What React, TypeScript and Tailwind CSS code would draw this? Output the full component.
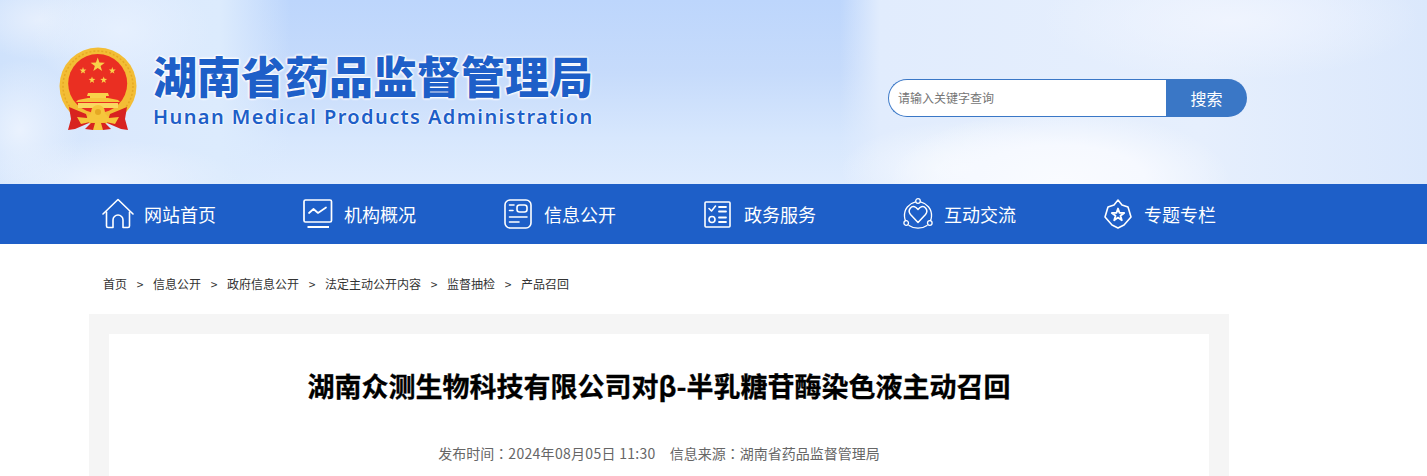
import * as React from "react";

const cjk = "font-['Noto_Sans_CJK_SC','Noto_Sans',sans-serif]";

const starPoints = (cx: number, cy: number, r: number) =>
  Array.from({ length: 10 }, (_, i) => {
    const radius = i % 2 === 0 ? r : r * 0.4;
    const a = (Math.PI / 5) * i - Math.PI / 2;
    return `${(cx + radius * Math.cos(a)).toFixed(2)},${(cy + radius * Math.sin(a)).toFixed(2)}`;
  }).join(" ");

function Emblem() {
  return (
    <svg width="80" height="86" viewBox="0 0 80 86" className="shrink-0">
      <circle cx="39" cy="39" r="38.5" fill="#f3bd35" />
      <circle cx="39" cy="39" r="35" fill="none" stroke="#e5a823" strokeWidth="1.5" strokeDasharray="2 2" />
      <circle cx="38.7" cy="36.5" r="29.5" fill="#ea2f22" />
      <polygon points={starPoints(38.7, 18, 7.5)} fill="#f8d24a" />
      <polygon points={starPoints(24, 23.7, 3.6)} fill="#f8d24a" />
      <polygon points={starPoints(53.3, 23.7, 3.6)} fill="#f8d24a" />
      <polygon points={starPoints(33, 33, 3.6)} fill="#f8d24a" />
      <polygon points={starPoints(44.7, 33, 3.6)} fill="#f8d24a" />
      <path d="M29 46 H49 L50 49 H47 V51 H31 V49 H28 Z" fill="#f8d24a" />
      <path d="M19 53 L29 51 H49 L59 53 L61 55 H17 Z" fill="#f6c63c" />
      <path d="M19 56 H59 V61 H19 Z" fill="#fad860" />
      <path d="M10 60 L27 67 L30 76 L16 82 L9 83 L12 72 Z" fill="#d8231f" />
      <path d="M68 60 L51 67 L48 76 L62 82 L69 83 L66 72 Z" fill="#d8231f" />
      <path d="M26 82 L32 76 H46 L52 82 L44 83 H34 Z" fill="#d8231f" />
      <path d="M18 70 L28 71 L32 66 H46 L50 71 L60 70 L56 77 L47 75 L39 76 L31 75 L22 77 Z" fill="#f6c63c" />
      <circle cx="39" cy="65" r="7" fill="#f6c63c" />
      <circle cx="39" cy="65" r="3" fill="#e5a823" />
      <path d="M36 76 H42 L44 83 H34 Z" fill="#f6c63c" />
    </svg>
  );
}

const iconProps = {
  fill: "none",
  stroke: "white",
  strokeWidth: 1.6,
  strokeLinecap: "round" as const,
  strokeLinejoin: "round" as const,
};

function HomeIcon() {
  return (
    <svg width="32" height="32" viewBox="0 0 32 32" {...iconProps}>
      <path d="M1 16 L16 1.5 L31 16" />
      <path d="M4.5 14 V28 Q4.5 29.5 6 29.5 H11 V22 A5 5 0 0 1 21 22 V29.5 H26 Q27.5 29.5 27.5 28 V14" />
    </svg>
  );
}
function MonitorIcon() {
  return (
    <svg width="30" height="30" viewBox="0 0 30 30" {...iconProps} strokeWidth={1.7}>
      <rect x="1" y="1" width="27.5" height="22" rx="1.5" />
      <path d="M6 14 L10.5 10 L15 14 L23 8.5" />
      <path d="M4.5 28 H26" strokeWidth={2} strokeLinecap="butt" />
    </svg>
  );
}
function InfoIcon() {
  return (
    <svg width="30" height="30" viewBox="0 0 30 30" {...iconProps}>
      <rect x="1" y="1" width="26" height="28" rx="5" />
      <path d="M5.5 6 H10 M5.5 11.5 H9 M5.5 18 H23 M5.5 23 H15" />
      <rect x="13" y="6" width="10" height="7" rx="2.5" />
    </svg>
  );
}
function ChecklistIcon() {
  return (
    <svg width="27" height="27" viewBox="0 0 27 27" {...iconProps}>
      <rect x="1" y="1" width="25" height="25" rx="1" />
      <path d="M5 7.5 L7.5 10 L11.5 5" />
      <path d="M15 6 H22 M15 10.5 H22 M15 16.5 H22 M15 21 H22" strokeWidth={1.8} />
      <circle cx="8" cy="18.5" r="3" />
    </svg>
  );
}
function HeartIcon() {
  return (
    <svg width="30" height="32" viewBox="0 0 30 32" {...iconProps} strokeWidth={1.3}>
      <path d="M15 24.5 L7.5 16.5 C4 12 8.5 6.5 13 9.5 L15 11.5 L17 9.5 C21.5 6.5 26 12 22.5 16.5 Z" strokeWidth={1.5} />
      <circle cx="15" cy="3" r="2.3" />
      <circle cx="3.2" cy="25" r="2.3" />
      <circle cx="26.8" cy="25" r="2.3" />
      <path d="M12.5 3.8 C6 5.5 1 11 1.5 18.5 Q1.6 20.5 2.5 22.5 M17.5 3.8 C24 5.5 29 11 28.5 18.5 Q28.4 20.5 27.5 22.5 M6 27.5 C11 31 19 31 24 27.5" />
    </svg>
  );
}
function BadgeIcon() {
  return (
    <svg width="28" height="30" viewBox="0 0 28 30" {...iconProps}>
      <path d="M14 1 L18 6 L24 8 L27 18 L20 26 L14 29 L8 26 L1 18 L4 8 L10 6 Z" />
      <polygon points={starPoints(14, 16, 6.5)} strokeWidth={1.8} />
    </svg>
  );
}

const navItems: Array<{ label: string; icon: React.ReactNode; shift: string }> = [
  { label: "网站首页", icon: <HomeIcon />, shift: "pl-[1px]" },
  { label: "机构概况", icon: <MonitorIcon />, shift: "pl-[2px]" },
  { label: "信息公开", icon: <InfoIcon />, shift: "pl-[3px]" },
  { label: "政务服务", icon: <ChecklistIcon />, shift: "pl-[3px]" },
  { label: "互动交流", icon: <HeartIcon />, shift: "pl-[2px]" },
  { label: "专题专栏", icon: <BadgeIcon />, shift: "pl-[3px]" },
];

const crumbs = ["首页", "信息公开", "政府信息公开", "法定主动公开内容", "监督抽检", "产品召回"];

export default function App() {
  return (
    <div className={`h-[476px] w-[1427px] overflow-hidden bg-white ${cjk}`}>
      <header className="flex h-[184px] bg-[#dce9fc] bg-[radial-gradient(ellipse_170px_70px_at_1060px_180px,#f9fbff_0%,#f6f9ff_50%,transparent_100%),radial-gradient(ellipse_130px_50px_at_970px_170px,#f8fbff_0%,transparent_100%),radial-gradient(ellipse_190px_60px_at_1230px_20px,#eff4fe_0%,transparent_100%),radial-gradient(ellipse_90px_60px_at_120px_30px,#e6f0fe_0%,transparent_100%),radial-gradient(ellipse_70px_40px_at_40px_20px,#e6effd_0%,transparent_100%),radial-gradient(ellipse_60px_70px_at_20px_130px,#eaf2fe_0%,transparent_100%),radial-gradient(ellipse_140px_40px_at_100px_180px,#eaf2fe_0%,transparent_100%),linear-gradient(90deg,#cfe2fc_0px,#dbe9fd_120px,#dcebfd_220px,transparent_290px,transparent_840px,#e1ecfd_880px,#e6effd_1200px,#dbe8fc_1427px),linear-gradient(180deg,#bdd6fc_0%,#c6dbfb_40%,#d7e7fd_75%,#dfecfe_100%)]">
        <div className="ml-[59px] flex w-[829px] items-start pt-[47px]">
          <Emblem />
          <div className="ml-[14px] flex flex-col">
            <div className="-mt-[1px] h-[58px] text-[44px] leading-[58px] font-black whitespace-nowrap text-[#1e5fc8] [text-shadow:0_0_3px_white,0_0_3px_white,0_0_3px_white,0_0_2px_white,0_0_2px_white]">
              湖南省药品监督管理局
            </div>
            <div className="h-[26px] font-['Noto_Sans',sans-serif] text-[20px] leading-[26px] font-semibold tracking-[1.4px] whitespace-nowrap text-[#1e5fc8] [text-shadow:0_0_2px_white,0_0_2px_white,0_0_2px_white]">
              Hunan Medical Products Administration
            </div>
          </div>
        </div>
        <div className="mt-[79px] flex h-[38px] w-[359px] items-stretch">
          <div className="flex w-[278px] items-center rounded-l-[19px] border border-r-0 border-[#3a77c6] bg-white pl-[9px] text-[12px] text-[#757575]">
            请输入关键字查询
          </div>
          <div className="flex w-[81px] items-center justify-center rounded-r-[19px] bg-[#3a77c6] text-[16px] text-white">
            搜索
          </div>
        </div>
      </header>

      <nav className="flex h-[60px] items-center bg-[#1e5fc8] pl-[101px]">
        {navItems.map((item) => (
          <div key={item.label} className="flex w-[200px] items-center">
            <div className={`flex h-[34px] w-[43px] items-center ${item.shift}`}>{item.icon}</div>
            <span className="text-[18px] text-white">{item.label}</span>
          </div>
        ))}
      </nav>

      <div className="flex h-[70px] items-center pt-[10px] pl-[103px] text-[12px] text-[#333]">
        {crumbs.map((crumb, i) => (
          <React.Fragment key={crumb}>
            {i > 0 && <span className="w-[26px] text-center">&gt;</span>}
            <span>{crumb}</span>
          </React.Fragment>
        ))}
      </div>

      <main className="ml-[89px] w-[1140px] bg-[#f5f5f5] px-[20px] pt-[20px]">
        <article className="h-[200px] bg-white pt-[19px] text-center">
          <h1 className="text-[27px] leading-[65px] font-bold text-black [-webkit-text-stroke:0.3px_black]">
            湖南众测生物科技有限公司对β-半乳糖苷酶染色液主动召回
          </h1>
          <p className="mt-[23px] text-[14px] leading-[24px] text-[#666]">
            发布时间<span className="font-['Noto_Sans_CJK_TC']">：</span>
            <span className="tracking-[0.3px]">2024年08月05日 11:30</span>
            <span className="ml-[14px]">信息来源</span>
            <span className="font-['Noto_Sans_CJK_TC']">：</span>湖南省药品监督管理局
          </p>
        </article>
      </main>
    </div>
  );
}
